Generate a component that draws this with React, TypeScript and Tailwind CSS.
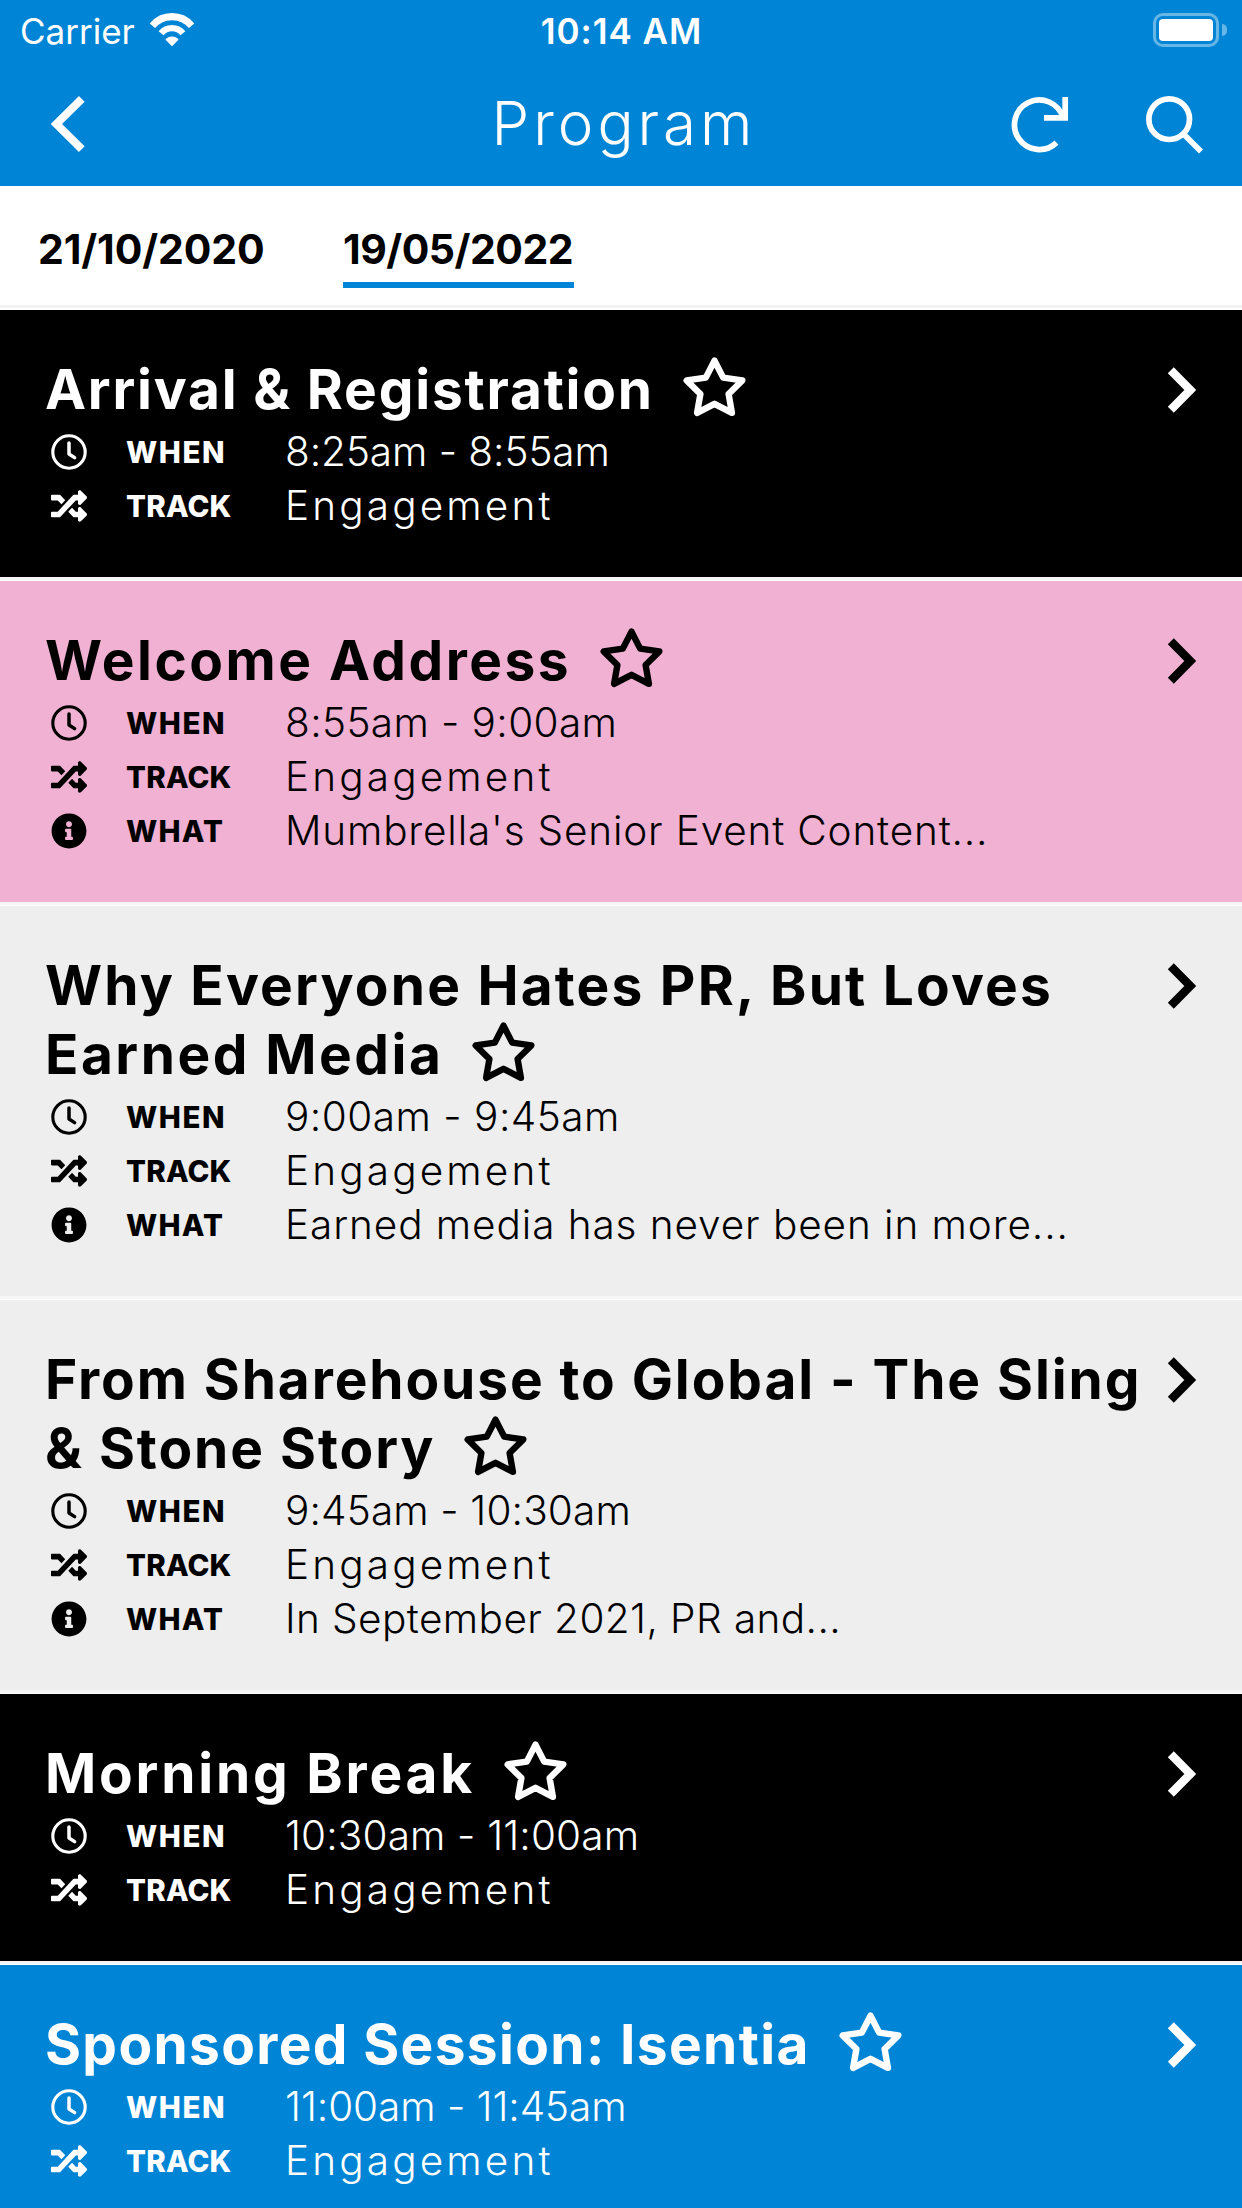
import clsx from "clsx";
import { FaInfoCircle, FaRandom } from "react-icons/fa";

type TextRun = { text: string; tracking: string };

type Session = {
  tone: "black" | "pink" | "gray" | "blue";
  title: TextRun[];
  when: TextRun;
  what?: TextRun;
};

const TONES = {
  black: "bg-black text-white",
  pink: "bg-[#f1b1d3] text-black",
  gray: "bg-[#eeeeee] text-black",
  blue: "bg-[#0085d6] text-white",
};

const SESSIONS: Session[] = [
  {
    tone: "black",
    title: [{ text: "Arrival & Registration", tracking: "tracking-[1.8px]" }],
    when: { text: "8:25am - 8:55am", tracking: "tracking-[-0.05px]" },
  },
  {
    tone: "pink",
    title: [{ text: "Welcome Address", tracking: "tracking-[2.5px]" }],
    when: { text: "8:55am - 9:00am", tracking: "tracking-[0.4px]" },
    what: { text: "Mumbrella's Senior Event Content...", tracking: "tracking-[0.83px]" },
  },
  {
    tone: "gray",
    title: [
      { text: "Why Everyone Hates PR, But Loves", tracking: "tracking-[2.2px]" },
      { text: "Earned Media", tracking: "tracking-[2.5px]" },
    ],
    when: { text: "9:00am - 9:45am", tracking: "tracking-[0.5px]" },
    what: { text: "Earned media has never been in more...", tracking: "tracking-[0.92px]" },
  },
  {
    tone: "gray",
    title: [
      { text: "From Sharehouse to Global - The Sling", tracking: "tracking-[1.91px]" },
      { text: "& Stone Story", tracking: "tracking-[1.95px]" },
    ],
    when: { text: "9:45am - 10:30am", tracking: "tracking-[0.15px]" },
    what: { text: "In September 2021, PR and...", tracking: "tracking-[0.42px]" },
  },
  {
    tone: "black",
    title: [{ text: "Morning Break", tracking: "tracking-[2.8px]" }],
    when: { text: "10:30am - 11:00am", tracking: "tracking-[0.15px]" },
  },
  {
    tone: "blue",
    title: [{ text: "Sponsored Session: Isentia", tracking: "tracking-[1.35px]" }],
    when: { text: "11:00am - 11:45am", tracking: "tracking-[-0.05px]" },
  },
];

function ClockIcon() {
  return (
    <svg width="36" height="36" viewBox="0 0 36 36" fill="none" stroke="currentColor">
      <circle cx="18" cy="18" r="16.2" strokeWidth="3.1" />
      <path d="M18 9v11l5.6 3.6" strokeWidth="3.5" strokeLinecap="round" strokeLinejoin="round" />
    </svg>
  );
}

function StarIcon() {
  return (
    <svg width="63" height="60" viewBox="0 0 63 60" fill="none" stroke="currentColor">
      <path
        d="M31.5 3.7L40.2 20.6L59.3 23.4L45.6 37L48.9 55.8L31.5 46.8L14.1 55.8L17.4 37L3.7 23.4L22.8 20.6Z"
        strokeWidth="6.4"
        strokeLinejoin="round"
      />
    </svg>
  );
}

function StatusBar() {
  return (
    <div className="flex h-[62px] items-center pr-[15px] pl-5 text-[35px] leading-none">
      <div className="flex flex-1 items-center">
        <span>Carrier</span>
        <svg className="-mt-1 ml-[13px]" width="48" height="36" viewBox="0 0 48 36" fill="none" stroke="currentColor">
          <path d="M4.4 14.8A25.6 25.6 0 0 1 43.6 14.8" strokeWidth="7.2" />
          <path d="M13.1 22.2A14.2 14.2 0 0 1 34.9 22.2" strokeWidth="6.4" />
          <path d="M17.5 28.8A8 8 0 0 1 30.5 28.8L24 35.2Z" fill="currentColor" stroke="none" />
        </svg>
      </div>
      <span className="mr-1 font-semibold tracking-[1px]">10:14 AM</span>
      <div className="-mt-0.5 flex flex-1 items-center justify-end gap-[3px]">
        <div className="h-[34px] w-[66px] rounded-[10px] border-[3px] border-white/40 p-[3px]">
          <div className="h-full rounded-[4px] bg-white" />
        </div>
        <div className="h-3 w-[5px] rounded-r-full bg-white/40" />
      </div>
    </div>
  );
}

function Header() {
  return (
    <header className="bg-[#0085d6] text-white">
      <StatusBar />
      <div className="flex h-[124px] items-center pr-[38px] pl-12">
        <div className="flex-1">
          <svg width="40" height="60" viewBox="0 0 40 60" fill="none" stroke="currentColor">
            <path d="M33.8 4.8L8.4 30L33.8 55.2" strokeWidth="8" />
          </svg>
        </div>
        <h1 className="-mt-0.5 mr-1 text-[60px] leading-none font-light tracking-[4px]">Program</h1>
        <div className="flex flex-1 justify-end gap-[74px]">
          <svg width="60" height="60" viewBox="0 0 60 60" fill="none" stroke="currentColor" strokeWidth="5.7">
            <path d="M46.5 48.6A24.8 24.8 0 1 1 53 23.5" />
            <path d="M55.2 3V23.8H34" />
          </svg>
          <svg width="60" height="60" viewBox="0 0 60 60" fill="none" stroke="currentColor" strokeWidth="5.7">
            <circle cx="25.2" cy="25.2" r="20.3" />
            <path d="M40 40.5L57 57.5" />
          </svg>
        </div>
      </div>
    </header>
  );
}

function DateTabs() {
  return (
    <>
      <nav className="flex h-[119px] items-start bg-white pt-[42px] pl-[38px] text-[41px] leading-[42px] font-bold text-black">
        <button className="mr-[77px] w-[228px] text-left tracking-[-0.1px]">21/10/2020</button>
        <button className="w-[231px] border-b-6 border-[#0085d6] pb-3 text-left tracking-[-0.5px]">
          19/05/2022
        </button>
      </nav>
      <div className="h-[3px] bg-[#f2f2f2]" />
      <div className="h-0.5 bg-white" />
    </>
  );
}

type DetailProps = {
  icon: React.ReactNode;
  label: TextRun;
  value: TextRun;
};

function Detail({ icon, label, value }: DetailProps) {
  return (
    <div className="flex h-[54px] items-center">
      <span className="mr-[33px] flex w-12 justify-center">{icon}</span>
      <span className={clsx("w-[159px] pt-px text-[29.5px] font-extrabold", label.tracking)}>{label.text}</span>
      <span className={clsx("text-[40.5px] leading-[52px] font-light whitespace-nowrap", value.tracking)}>
        {value.text}
      </span>
    </div>
  );
}

function SessionCard({ session }: { session: Session }) {
  return (
    <article className={clsx("pt-[45px] pb-11 pl-[45px]", TONES[session.tone])}>
      <div className="mb-px flex items-start justify-between pr-[42px]">
        <h2 className="text-[55px] leading-[69px] font-bold whitespace-nowrap">
          {session.title.map((line, i) => (
            <span key={line.text} className="flex h-[69px] items-center">
              <span className={line.tracking}>{line.text}</span>
              {i === session.title.length - 1 && (
                <span className="-mt-1.5 ml-[29px]">
                  <StarIcon />
                </span>
              )}
            </span>
          ))}
        </h2>
        <svg className="mt-[11px] shrink-0" width="36" height="48" viewBox="0 0 36 48" fill="none" stroke="currentColor">
          <path d="M6.8 4.3L26.3 24L6.8 43.7" strokeWidth="8.4" />
        </svg>
      </div>
      <Detail icon={<ClockIcon />} label={{ text: "WHEN", tracking: "tracking-[1.6px]" }} value={session.when} />
      <Detail
        icon={<FaRandom size={36} />}
        label={{ text: "TRACK", tracking: "tracking-[0.2px]" }}
        value={{ text: "Engagement", tracking: "tracking-[3.15px]" }}
      />
      {session.what && (
        <Detail
          icon={<FaInfoCircle size={36} />}
          label={{ text: "WHAT", tracking: "tracking-[1.2px]" }}
          value={session.what}
        />
      )}
    </article>
  );
}

export default function App() {
  return (
    <div className="h-[2208px] w-[1242px] overflow-hidden bg-white font-['Inter',sans-serif]">
      <Header />
      <DateTabs />
      <main>
        {SESSIONS.map((session) => (
          <div key={session.title[0].text} className="border-b border-white">
            <SessionCard session={session} />
            <div className="h-[3px] bg-[#f5f5f5]" />
          </div>
        ))}
      </main>
    </div>
  );
}
